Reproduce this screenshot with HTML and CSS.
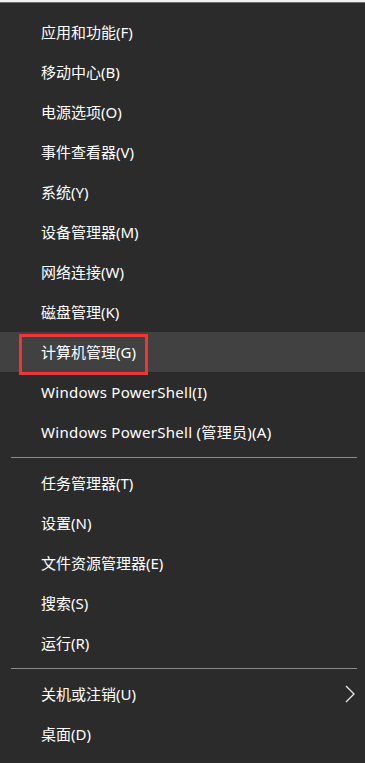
FILE: index.html
```html
<!DOCTYPE html>
<html lang="zh-CN">
<head>
<meta charset="utf-8">
<link rel="stylesheet" href="styles.css">
</head>
<body>
<div class="topstrip"></div>
<nav class="menu">
  <div class="item"><span class="label">应用和功能(F)</span></div>
  <div class="item"><span class="label">移动中心(B)</span></div>
  <div class="item"><span class="label">电源选项(O)</span></div>
  <div class="item"><span class="label">事件查看器(V)</span></div>
  <div class="item"><span class="label">系统(Y)</span></div>
  <div class="item"><span class="label">设备管理器(M)</span></div>
  <div class="item"><span class="label">网络连接(W)</span></div>
  <div class="item"><span class="label">磁盘管理(K)</span></div>
  <div class="item active"><span class="label">计算机管理(G)</span><span class="mark"></span></div>
  <div class="item"><span class="label latin">Windows PowerShell(I)</span></div>
  <div class="item"><span class="label latin">Windows PowerShell (管理员)(A)</span></div>
  <div class="sep"></div>
  <div class="item"><span class="label">任务管理器(T)</span></div>
  <div class="item"><span class="label">设置(N)</span></div>
  <div class="item"><span class="label">文件资源管理器(E)</span></div>
  <div class="item"><span class="label">搜索(S)</span></div>
  <div class="item"><span class="label">运行(R)</span></div>
  <div class="sep"></div>
  <div class="item sub"><span class="label">关机或注销(U)</span>
    <svg class="chev" width="10" height="18" viewBox="0 0 10 18"><path d="M1 1 L9 9 L1 17" fill="none" stroke="#e8e8e8" stroke-width="1.3"/></svg>
  </div>
  <div class="item"><span class="label">桌面(D)</span></div>
</nav>
</body>
</html>
```
FILE: styles.css
```css
html, body {
  margin: 0;
  padding: 0;
  background: #2b2b2b;
  height: 100%;
  overflow: hidden;
}
body {
  font-family: "Segoe UI", "Noto Sans", "Noto Sans CJK SC", sans-serif;
  color: #ffffff;
}
.topstrip {
  height: 3px;
  background: linear-gradient(#f2f2f2 0, #f2f2f2 2px, #6e6e6e 2px, #6e6e6e 3px);
}
.menu {
  display: flex;
  flex-direction: column;
  padding-top: 9px;
}
.item {
  position: relative;
  height: 40px;
  display: flex;
  align-items: center;
  padding-left: 41px;
  padding-right: 10px;
  font-size: 15px;
  line-height: 20px;
}
.latin {
  letter-spacing: 0.3px;
}
.item.active {
  background: #414141;
}
.mark {
  position: absolute;
  left: 19px;
  top: 2px;
  width: 123px;
  height: 35px;
  border: 3px solid #ef3535;
}
.sep {
  height: 11px;
  display: flex;
  align-items: center;
  padding: 0 8px 0 11px;
}
.sep::before {
  content: "";
  flex: 1;
  height: 1px;
  background: #8a8a8a;
}
.sub {
  justify-content: space-between;
}
```
